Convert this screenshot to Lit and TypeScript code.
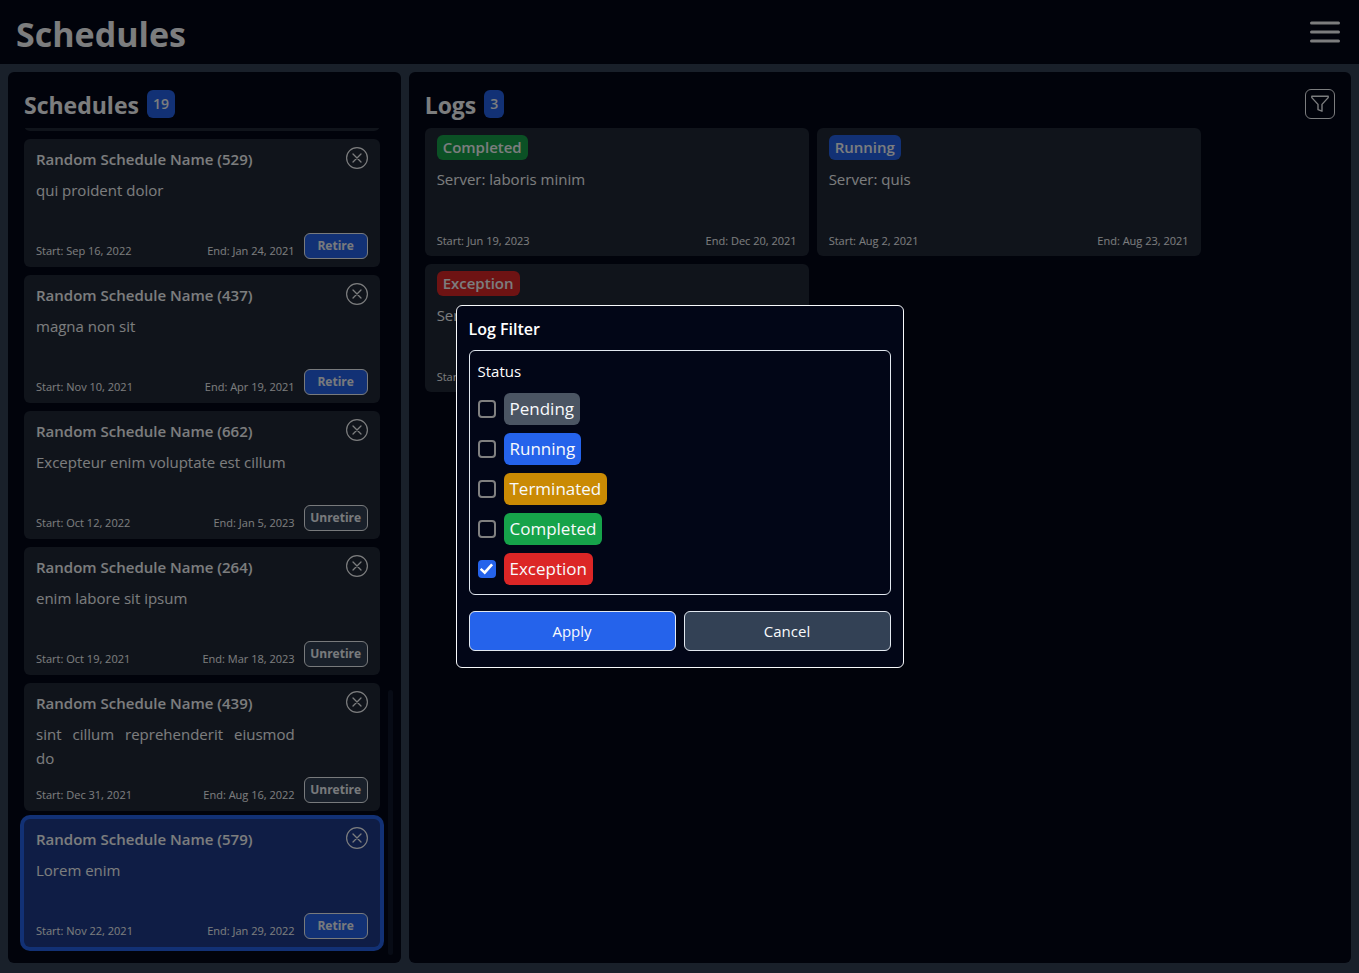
import { LitElement, html, css, svg } from "lit";
import { customElement, property } from "lit/decorators.js";

type Schedule = { name: string; text: string; start: string; end: string; retired?: boolean; selected?: boolean };
type Status = "pending" | "running" | "terminated" | "completed" | "exception";
type Log = { status: Status; server: string; start: string; end: string };

const LABELS: Record<Status, string> = {
  pending: "Pending",
  running: "Running",
  terminated: "Terminated",
  completed: "Completed",
  exception: "Exception",
};

const SCHEDULES: Schedule[] = [
  { name: "Random Schedule Name (529)", text: "qui proident dolor", start: "Sep 16, 2022", end: "Jan 24, 2021" },
  { name: "Random Schedule Name (437)", text: "magna non sit", start: "Nov 10, 2021", end: "Apr 19, 2021" },
  { name: "Random Schedule Name (662)", text: "Excepteur enim voluptate est cillum", start: "Oct 12, 2022", end: "Jan 5, 2023", retired: true },
  { name: "Random Schedule Name (264)", text: "enim labore sit ipsum", start: "Oct 19, 2021", end: "Mar 18, 2023", retired: true },
  { name: "Random Schedule Name (439)", text: "sint cillum reprehenderit eiusmod do", start: "Dec 31, 2021", end: "Aug 16, 2022", retired: true },
  { name: "Random Schedule Name (579)", text: "Lorem enim", start: "Nov 22, 2021", end: "Jan 29, 2022", selected: true },
];

const LOGS: Log[] = [
  { status: "completed", server: "laboris minim", start: "Jun 19, 2023", end: "Dec 20, 2021" },
  { status: "running", server: "quis", start: "Aug 2, 2021", end: "Aug 23, 2021" },
  { status: "exception", server: "", start: "", end: "" },
];

const shared = css`
  * { box-sizing: border-box; margin: 0; }
  button { font: inherit; color: inherit; padding: 0; cursor: pointer; }
  svg { display: block; }
  .tag { border-radius: 6px; padding: 0 6px; color: #f8fafc; }
  .pending { background: #4b5563; }
  .running { background: #2563eb; }
  .terminated { background: #ca8a04; }
  .completed { background: #16a34a; }
  .exception { background: #dc2626; }
`;

@customElement("schedule-card")
class ScheduleCard extends LitElement {
  @property({ attribute: false }) item!: Schedule;

  static styles = [shared, css`
    :host { display: block; flex: none; }
    .card {
      display: grid; grid-template-columns: minmax(0, 1fr) 64px; column-gap: 9px;
      height: 128px; padding: 8px 12px; border-radius: 6px; background: #202836;
    }
    .selected { background: #1e3a8a; box-shadow: 0 0 0 4px #2563eb; }
    .body, .side { display: flex; flex-direction: column; justify-content: space-between; }
    .side { align-items: flex-end; }
    h3 { font-size: 15px; line-height: 24px; font-weight: 600; white-space: nowrap; }
    p { margin-top: 7px; font-size: 15px; line-height: 24px; text-align: justify; }
    .dates { display: flex; justify-content: space-between; font-size: 11px; line-height: 16px; }
    .close { width: 22px; height: 22px; border: 0; background: none; }
    .toggle {
      width: 64px; height: 26px; border: 1px solid #f1f5f9; border-radius: 6px;
      background: #2563eb; font-size: 12px; line-height: 24px; font-weight: 700; color: #f1f5f9;
    }
    .retired { background: #334155; }
  `];

  render() {
    const s = this.item;
    return html`
      <article class="card ${s.selected ? "selected" : ""}">
        <div class="body">
          <div><h3>${s.name}</h3><p>${s.text}</p></div>
          <div class="dates"><span>Start: ${s.start}</span><span>End: ${s.end}</span></div>
        </div>
        <div class="side">
          <button class="close" aria-label="Delete schedule">
            <svg width="22" height="22" viewBox="0 0 22 22" fill="none" stroke="currentColor" stroke-linecap="round">
              <circle cx="11" cy="11" r="10.4" stroke-width="1.2" />
              <path d="M7 7l8 8M15 7l-8 8" stroke-width="1.3" />
            </svg>
          </button>
          <button class="toggle ${s.retired ? "retired" : ""}">${s.retired ? "Unretire" : "Retire"}</button>
        </div>
      </article>`;
  }
}

@customElement("log-card")
class LogCard extends LitElement {
  @property({ attribute: false }) item!: Log;

  static styles = [shared, css`
    :host { display: block; width: 384px; max-width: 100%; }
    .card {
      display: flex; flex-direction: column; height: 128px; padding: 7px 12px;
      border-radius: 6px; background: #202836;
    }
    .tag { align-self: flex-start; font-size: 15px; line-height: 25px; font-weight: 600; }
    p { margin-top: 7px; font-size: 15px; line-height: 24px; }
    .dates {
      display: flex; justify-content: space-between; margin-top: auto;
      font-size: 11px; line-height: 16px;
    }
  `];

  render() {
    const l = this.item;
    return html`
      <article class="card">
        <span class="tag ${l.status}">${LABELS[l.status]}</span>
        <p>Server: ${l.server}</p>
        <div class="dates"><span>Start: ${l.start}</span><span>${l.end ? `End: ${l.end}` : ""}</span></div>
      </article>`;
  }
}

@customElement("log-filter")
class LogFilter extends LitElement {
  static styles = [shared, css`
    :host { display: block; width: 448px; max-width: 100%; }
    .dialog {
      display: flex; flex-direction: column; padding: 11px 12px 16px;
      border: 1px solid #f8fafc; border-radius: 6px; background: #020617; color: #fff;
    }
    h2 { margin-bottom: 9px; font-size: 16px; line-height: 24px; font-weight: 600; }
    .group {
      display: flex; flex-direction: column; gap: 8px; padding: 8px 8px 9px;
      border: 1px solid #e2e8f0; border-radius: 6px;
    }
    .caption { margin-bottom: 2px; font-size: 15px; line-height: 24px; }
    .row { display: flex; align-items: center; gap: 8px; }
    .row .tag { font-size: 17px; line-height: 32px; }
    .box {
      appearance: none; display: grid; place-items: center; width: 18px; height: 18px;
      border: 2px solid #808080; border-radius: 4px; background: none;
    }
    .box:checked { border-color: #2563eb; background: #2563eb; }
    .box:checked::before {
      content: ""; width: 14px; height: 14px; background: #fff;
      clip-path: polygon(2% 56%, 14% 42%, 36% 62%, 83% 11%, 97% 24%, 38% 90%);
    }
    .actions { display: grid; grid-template-columns: 1fr 1fr; gap: 8px; margin-top: 16px; }
    .actions button {
      height: 40px; border: 1px solid #e2e8f0; border-radius: 6px;
      background: #334155; font-size: 15px; color: #f8fafc;
    }
    .actions .primary { background: #2563eb; }
  `];

  render() {
    return html`
      <form class="dialog" role="dialog" aria-labelledby="title" @submit=${(e: Event) => e.preventDefault()}>
        <h2 id="title">Log Filter</h2>
        <div class="group" role="group" aria-labelledby="caption">
          <div class="caption" id="caption">Status</div>
          ${(Object.keys(LABELS) as Status[]).map((key) => html`
            <div class="row">
              <input class="box" type="checkbox" id=${key} ?checked=${key === "exception"} />
              <label class="tag ${key}" for=${key}>${LABELS[key]}</label>
            </div>`)}
        </div>
        <div class="actions">
          <button class="primary" type="submit">Apply</button>
          <button type="button">Cancel</button>
        </div>
      </form>`;
  }
}

@customElement("app-root")
class AppRoot extends LitElement {
  static styles = [shared, css`
    :host {
      display: flex; flex-direction: column; height: 100vh; background: #334155;
      color: #f8fafc; font-family: "Segoe UI", "Open Sans", "Noto Sans", sans-serif;
    }
    header {
      display: flex; align-items: center; justify-content: space-between;
      height: 64px; padding: 0 16px; background: #020617;
    }
    h1 { padding-top: 4px; font-size: 34px; line-height: 40px; font-weight: 700; }
    .menu { width: 36px; height: 36px; border: 0; background: none; }
    main {
      flex: 1; min-height: 0; display: grid; grid-template-columns: 5fr 12fr;
      grid-template-rows: minmax(0, 1fr); gap: 8px; padding: 8px 8px 10px;
    }
    .panel {
      display: flex; flex-direction: column; min-width: 0; padding: 8px;
      border-radius: 6px; background: #020617;
    }
    .schedules { padding-right: 8px; }
    .head { display: flex; align-items: center; gap: 8px; height: 48px; padding: 0 8px; }
    h2 { padding-top: 2px; font-size: 23px; line-height: 32px; font-weight: 700; }
    .count {
      border-radius: 6px; padding: 0 6px; background: #2563eb;
      font-size: 14px; line-height: 28px; font-weight: 600;
    }
    .filter {
      display: grid; place-items: center; width: 30px; height: 30px; margin-left: auto;
      border: 1px solid #f8fafc; border-radius: 6px; background: none;
    }
    .scroller { flex: 1; min-height: 0; display: flex; }
    .list {
      flex: 1; min-width: 0; display: flex; flex-direction: column; justify-content: flex-end;
      gap: 8px; padding: 0 8px 8px; overflow: hidden;
    }
    .previous { flex: none; height: 128px; border-radius: 6px; background: #202836; }
    .track { width: 5px; display: flex; flex-direction: column; justify-content: flex-end; }
    .thumb { height: 32%; border-radius: 3px; background: #0f172a; }
    .logs { display: flex; flex-wrap: wrap; align-content: flex-start; gap: 8px; padding: 0 8px; }
    .overlay {
      position: fixed; inset: 0; display: grid; place-items: center;
      background: rgb(0 0 0 / 50%);
    }
  `];

  render() {
    return html`
      <header>
        <h1>Schedules</h1>
        <button class="menu" aria-label="Open menu">
          <svg width="36" height="36" viewBox="0 0 36 36" fill="none" stroke="currentColor" stroke-width="3" stroke-linecap="round">
            ${[9, 18, 27].map((y) => svg`<path d="M4.5 ${y}h27" />`)}
          </svg>
        </button>
      </header>
      <main>
        <section class="panel schedules">
          <div class="head"><h2>Schedules</h2><span class="count">19</span></div>
          <div class="scroller">
            <div class="list">
              <div class="previous"></div>
              ${SCHEDULES.map((s) => html`<schedule-card .item=${s}></schedule-card>`)}
            </div>
            <div class="track"><div class="thumb"></div></div>
          </div>
        </section>
        <section class="panel">
          <div class="head">
            <h2>Logs</h2><span class="count">3</span>
            <button class="filter" aria-label="Filter logs">
              <svg width="20" height="20" viewBox="0 0 20 20" fill="none" stroke="currentColor" stroke-width="1.4" stroke-linejoin="round">
                <path d="M1.8 2.2h16.4v1.4l-6.2 6.8v6.8l-4-1.6v-5.2l-6.2-6.8z" />
              </svg>
            </button>
          </div>
          <div class="logs">${LOGS.map((l) => html`<log-card .item=${l}></log-card>`)}</div>
        </section>
      </main>
      <div class="overlay"><log-filter></log-filter></div>`;
  }
}
